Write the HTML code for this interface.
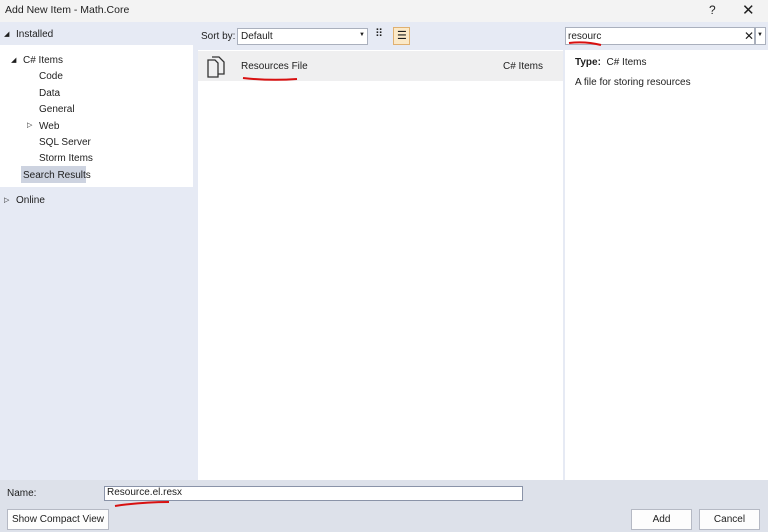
<!DOCTYPE html>
<html><head><style>
*{margin:0;padding:0;box-sizing:border-box}
html,body{width:768px;height:532px;overflow:hidden}
body{background:#e6eaf4;font-family:"Liberation Sans",sans-serif;font-size:10px;color:#1e1e1e;position:relative}
.a{position:absolute}
.t{white-space:nowrap}
.btn{position:absolute;background:#fdfdfd;border:1px solid #b5b9c4;text-align:center;line-height:19px;font-size:10px;white-space:nowrap}
</style></head><body>
<div class="a" style="left:0;top:0;width:768px;height:22px;background:#f3f3f3"></div>
<div class="a t" style="left:5px;top:4px;font-size:10.5px">Add New Item - Math.Core</div>
<div class="a t" style="left:709px;top:3px;font-size:12px">?</div>
<div class="a t" style="left:742px;top:1px;font-size:15px">✕</div>

<div class="a t" style="left:4px;top:30px;font-size:7px">◢</div>
<div class="a t" style="left:16px;top:29px">Installed</div>
<div class="a" style="left:0;top:45px;width:193px;height:142px;background:#fff"></div>
<div class="a t" style="left:11px;top:56px;font-size:7px">◢</div>
<div class="a t" style="left:23px;top:55px">C# Items</div>
<div class="a t" style="left:39px;top:71px">Code</div>
<div class="a t" style="left:39px;top:88px">Data</div>
<div class="a t" style="left:39px;top:104px">General</div>
<div class="a t" style="left:27px;top:121px;font-size:7px">▷</div>
<div class="a t" style="left:39px;top:121px">Web</div>
<div class="a t" style="left:39px;top:137px">SQL Server</div>
<div class="a t" style="left:39px;top:153px">Storm Items</div>
<div class="a" style="left:21px;top:166px;width:65px;height:17px;background:#cdd3e0"></div>
<div class="a t" style="left:23px;top:170px">Search Results</div>
<div class="a t" style="left:4px;top:196px;font-size:7px">▷</div>
<div class="a t" style="left:16px;top:195px">Online</div>

<div class="a t" style="left:201px;top:31px">Sort by:</div>
<div class="a" style="left:237px;top:28px;width:131px;height:17px;background:#fff;border:1px solid #aab0bd"></div>
<div class="a t" style="left:241px;top:31px">Default</div>
<div class="a t" style="left:359px;top:32px;font-size:6px">▼</div>
<div class="a t" style="left:375px;top:27px;font-size:11px;letter-spacing:-1px">⠿</div>
<div class="a" style="left:393px;top:27px;width:17px;height:18px;background:#fbe9c8;border:1px solid #e0b070"></div>
<div class="a t" style="left:397px;top:29px;font-size:11px">☰</div>

<div class="a" style="left:565px;top:27px;width:190px;height:18px;background:#fff;border:1px solid #aab0bd"></div>
<div class="a t" style="left:568px;top:31px">resourc</div>
<div class="a t" style="left:744px;top:29px;font-size:12px">✕</div>
<div class="a" style="left:755px;top:27px;width:11px;height:18px;background:#fff;border:1px solid #aab0bd"></div>
<div class="a t" style="left:757px;top:32px;font-size:6px">▼</div>
<svg class="a" style="left:565px;top:38px" width="40" height="10"><path d="M4 5 Q20 3 36 7" stroke="#d81010" stroke-width="2" fill="none"/></svg>

<div class="a" style="left:198px;top:50px;width:365px;height:430px;background:#fff"></div>
<div class="a" style="left:198px;top:51px;width:365px;height:30px;background:#efeff0"></div>
<svg class="a" style="left:205px;top:55px" width="22" height="24"><path d="M3 5 H10 L13 8 V22 H3 Z" fill="none" stroke="#333" stroke-width="1.3"/><path d="M7 2 H14 L19 7 V19 H13" fill="none" stroke="#333" stroke-width="1.3"/></svg>
<div class="a t" style="left:241px;top:61px">Resources File</div>
<div class="a t" style="left:503px;top:61px">C# Items</div>
<svg class="a" style="left:240px;top:74px" width="62" height="10"><path d="M3 4 Q30 7 57 5" stroke="#d81010" stroke-width="2" fill="none"/></svg>

<div class="a" style="left:565px;top:50px;width:203px;height:430px;background:#fff"></div>
<div class="a t" style="left:575px;top:57px"><b>Type:</b>&nbsp; C# Items</div>
<div class="a t" style="left:575px;top:77px">A file for storing resources</div>

<div class="a" style="left:0;top:480px;width:768px;height:52px;background:#dde1ea"></div>
<div class="a t" style="left:7px;top:488px">Name:</div>
<div class="a" style="left:104px;top:486px;width:419px;height:15px;background:#fff;border:1px solid #8a93a8"></div>
<div class="a t" style="left:107px;top:487px">Resource.el.resx</div>
<svg class="a" style="left:112px;top:499px" width="62" height="10"><path d="M3 7 Q30 3 57 3" stroke="#d81010" stroke-width="2" fill="none"/></svg>
<div class="btn" style="left:7px;top:509px;width:102px;height:21px">Show Compact View</div>
<div class="btn" style="left:631px;top:509px;width:61px;height:21px">Add</div>
<div class="btn" style="left:699px;top:509px;width:61px;height:21px">Cancel</div>
</body></html>
